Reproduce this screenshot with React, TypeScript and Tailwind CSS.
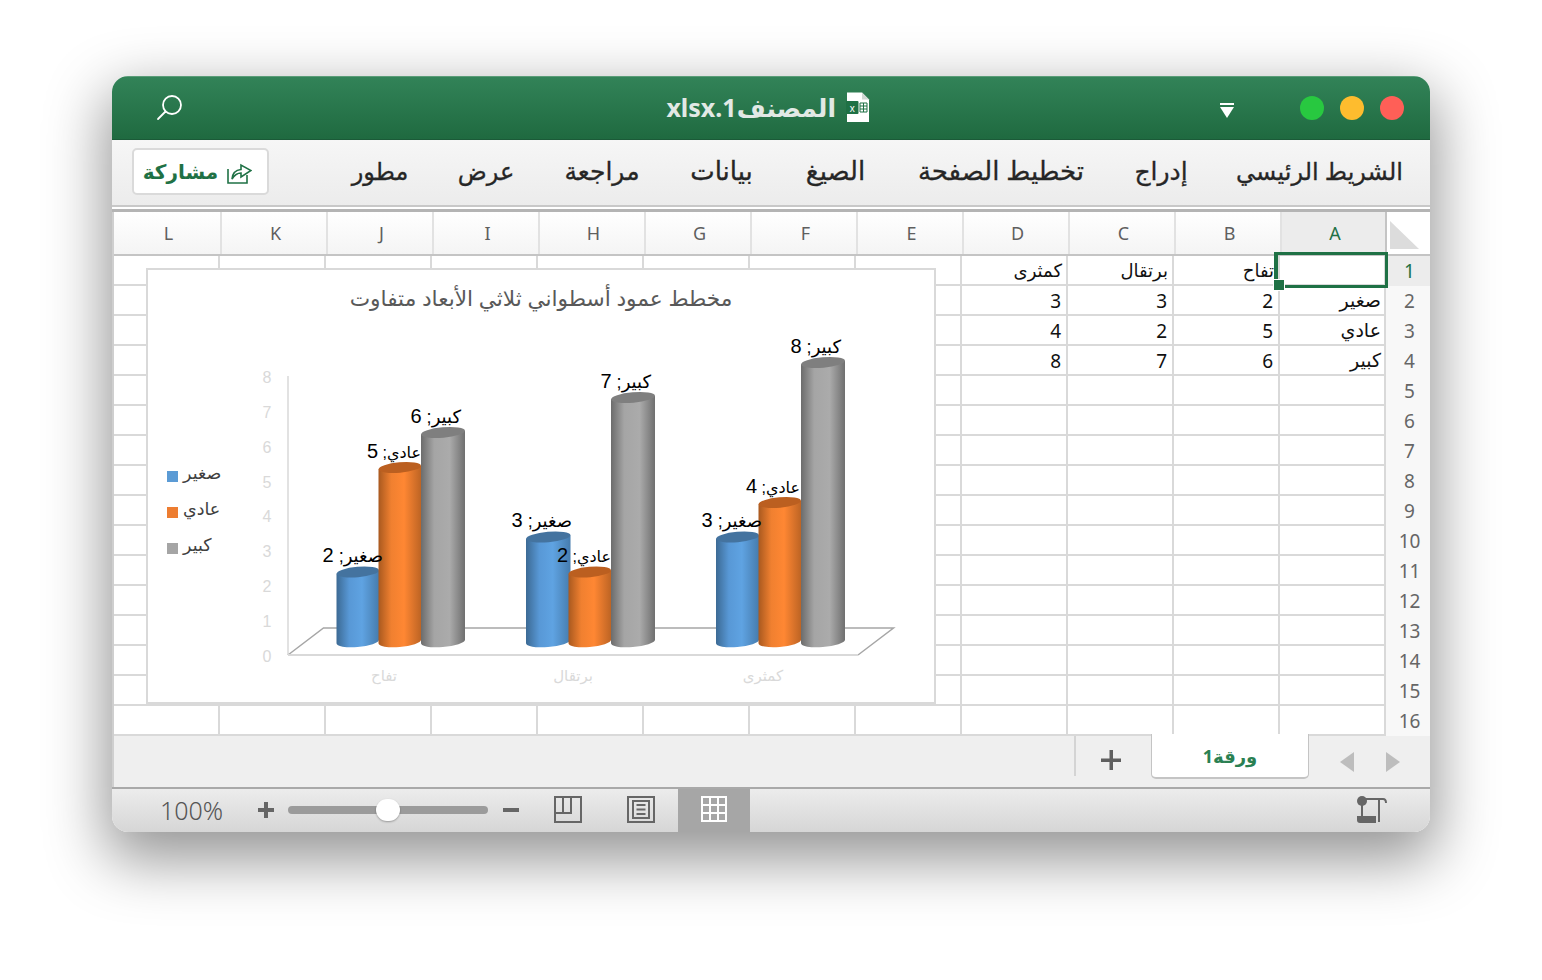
import React from 'react'

const AR = "font-['Noto_Sans','DejaVu_Sans',sans-serif]"

const COLS = ['L', 'K', 'J', 'I', 'H', 'G', 'F', 'E', 'D', 'C', 'B', 'A']
const HEAD_W: Record<string, string> = { L: 'w-[108px]', A: 'w-[105px]' }

const TABS = [
  { label: 'الشريط الرئيسي', w: 'w-[163px] text-[24px]' },
  { label: 'إدراج', w: 'w-[54px] text-[25px]' },
  { label: 'تخطيط الصفحة', w: 'w-[166px] text-[26px]' },
  { label: 'الصيغ', w: 'w-[65px] text-[26px]' },
  { label: 'بيانات', w: 'w-[63px] text-[26px]' },
  { label: 'مراجعة', w: 'w-[76px] text-[25px]' },
  { label: 'عرض', w: 'w-[56px] text-[24px]' },
  { label: 'مطور', w: 'w-[56px] text-[24px]' },
]

// الصفوف من اليمين: A ثم B ثم C ثم D
const DATA: Record<number, string[]> = {
  1: ['', 'تفاح', 'برتقال', 'كمثرى'],
  2: ['صغير', '2', '3', '3'],
  3: ['عادي', '5', '2', '4'],
  4: ['كبير', '6', '7', '8'],
}

const BARS = [
  { x: 336.5, w: 42.5, top: 572, fill: 'url(#blueBar)', cap: '#44739f' },
  { x: 378.5, w: 42.5, top: 467.5, fill: 'url(#orangeBar)', cap: '#bb5f20' },
  { x: 421, w: 44, top: 432.5, fill: 'url(#grayBar)', cap: '#7f7f7f' },
  { x: 526, w: 44.5, top: 537, fill: 'url(#blueBar)', cap: '#44739f' },
  { x: 568.5, w: 42.5, top: 572, fill: 'url(#orangeBar)', cap: '#bb5f20' },
  { x: 611, w: 44, top: 397.5, fill: 'url(#grayBar)', cap: '#7f7f7f' },
  { x: 716, w: 43, top: 537, fill: 'url(#blueBar)', cap: '#44739f' },
  { x: 758.5, w: 42.5, top: 502.5, fill: 'url(#orangeBar)', cap: '#bb5f20' },
  { x: 801, w: 44, top: 362.5, fill: 'url(#grayBar)', cap: '#7f7f7f' },
]

const LABELS = [
  { t: 'صغير', n: 2, x: 383, y: 562 },
  { t: 'عادي', n: 5, x: 421, y: 458 },
  { t: 'كبير', n: 6, x: 461, y: 423 },
  { t: 'صغير', n: 3, x: 572, y: 527 },
  { t: 'عادي', n: 2, x: 611, y: 562 },
  { t: 'كبير', n: 7, x: 651, y: 388 },
  { t: 'صغير', n: 3, x: 762, y: 527 },
  { t: 'عادي', n: 4, x: 800, y: 493 },
  { t: 'كبير', n: 8, x: 841, y: 353 },
]

function Cylinder({ x, w, top, fill, cap }: { x: number; w: number; top: number; fill: string; cap: string }) {
  const rx = w / 2
  const cx = x + rx
  const base = 641.5
  const d = rx * 0.08
  return (
    <g>
      <path
        d={`M${x} ${top + d} L${x} ${base + d} A${rx} 5.5 -5 0 0 ${x + w} ${base - d} L${x + w} ${top - d} Z`}
        fill={fill}
      />
      <ellipse cx={cx} cy={top} rx={rx} ry={5.2} transform={`rotate(-5 ${cx} ${top})`} fill={cap} />
    </g>
  )
}

function Chart() {
  return (
    <div className="absolute left-[32px] top-[12px] w-[790px] h-[436px] border-2 border-[#d9d9d9] bg-white">
      <div dir="rtl" className={`h-[50px] flex items-center justify-center pt-[7px] text-[21.7px] text-[#595959] whitespace-nowrap ${AR}`}>
        مخطط عمود أسطواني ثلاثي الأبعاد متفاوت
      </div>
      <svg width="786" height="382" viewBox="148 320 786 382" className="block">
        <defs>
          <linearGradient id="blueBar">
            <stop offset="0" stopColor="#3c6a94" />
            <stop offset="0.3" stopColor="#5898d6" />
            <stop offset="0.6" stopColor="#5fa3e2" />
            <stop offset="1" stopColor="#467cae" />
          </linearGradient>
          <linearGradient id="orangeBar">
            <stop offset="0" stopColor="#a9591f" />
            <stop offset="0.3" stopColor="#f08030" />
            <stop offset="0.6" stopColor="#ff8733" />
            <stop offset="1" stopColor="#bd6424" />
          </linearGradient>
          <linearGradient id="grayBar">
            <stop offset="0" stopColor="#6c6c6c" />
            <stop offset="0.3" stopColor="#a5a5a5" />
            <stop offset="0.65" stopColor="#ababab" />
            <stop offset="1" stopColor="#6f6f6f" />
          </linearGradient>
        </defs>

        {/* المحاور */}
        <line x1="288" y1="376" x2="288" y2="655" stroke="#d9d9d9" strokeWidth="1.5" />
        <path d="M288 655L323.5 628H893.5L858 655" fill="none" stroke="#a6a6a6" strokeWidth="1.5" />
        <line x1="288" y1="655" x2="858" y2="655" stroke="#d9d9d9" strokeWidth="2" />

        {[8, 7, 6, 5, 4, 3, 2, 1, 0].map((n, i) => (
          <text key={n} x="267" y={383 + i * 34.85} textAnchor="middle" fill="#d9d9d9" className="text-[16px] font-['Liberation_Sans',sans-serif]">
            {n}
          </text>
        ))}

        {[
          { t: 'تفاح', x: 384 },
          { t: 'برتقال', x: 573 },
          { t: 'كمثرى', x: 763 },
        ].map((c) => (
          <text key={c.t} x={c.x} y="681" textAnchor="middle" fill="#d9d9d9" className={`text-[15px] ${AR}`}>
            {c.t}
          </text>
        ))}

        {BARS.map((b, i) => (
          <Cylinder key={i} {...b} />
        ))}

        {LABELS.map((l, i) => (
          <text
            key={i}
            x={l.x}
            y={l.y}
            direction="rtl"
            fill="#000"
            className={`font-['Liberation_Sans','DejaVu_Sans',sans-serif] ${l.t === 'عادي' ? 'text-[16px]' : 'text-[18px]'}`}
          >
            {l.t}; <tspan className="text-[20px]">{l.n}</tspan>
          </text>
        ))}

        {/* وسيلة الإيضاح */}
        {[
          { t: 'صغير', y: 471, c: '#5b9bd5' },
          { t: 'عادي', y: 507, c: '#ed7d31' },
          { t: 'كبير', y: 543, c: '#a5a5a5' },
        ].map((l) => (
          <g key={l.t}>
            <rect x="167" y={l.y} width="11" height="11" fill={l.c} />
            <text x="183" y={l.y + 8} fill="#404040" className={`text-[17.5px] ${AR}`}>
              {l.t}
            </text>
          </g>
        ))}
      </svg>
    </div>
  )
}

function SearchIcon() {
  return (
    <svg width="30" height="30" viewBox="0 0 30 30" fill="none" stroke="#fff" strokeWidth="1.8" strokeLinecap="round">
      <circle cx="19" cy="12" r="9" />
      <line x1="12.5" y1="18.5" x2="5" y2="26" />
    </svg>
  )
}

function ExcelDoc() {
  return (
    <svg width="24" height="30" viewBox="0 0 24 30">
      <path d="M1 0.5H16L23 7.5V30H1Z" fill="#fff" />
      <path d="M16 0.5V7.5H23Z" fill="#cfd8d3" />
      <rect x="0" y="9" width="12.5" height="13" rx="1" fill="#1f7145" />
      <text x="6.2" y="19.5" textAnchor="middle" fill="#fff" className="text-[10px] font-['Liberation_Sans',sans-serif]">x</text>
      <path d="M14 11h7v9h-7zM14 14h7M14 17h7M17.5 11v9" fill="none" stroke="#1f7145" strokeWidth="1" />
    </svg>
  )
}

function ShareIcon() {
  return (
    <svg width="25" height="25" viewBox="0 0 25 25" fill="none" stroke="#1f7145" strokeWidth="1.6">
      <path d="M1 10V24H20V16" />
      <path d="M5 20C5.5 14 9 11 14 10.5V6L24 11.5L14 18V14C10 14 7.5 16 5 20Z" />
    </svg>
  )
}

function RowHead({ n }: { n: number }) {
  return (
    <div
      className={`h-[30px] flex items-center justify-center pl-[3px] text-[19px] font-['Noto_Sans',sans-serif] ${
        n === 1 ? 'bg-[#ececec] text-[#1f7145]' : 'bg-[#f8f8f8] text-[#666666]'
      }`}
    >
      {n}
    </div>
  )
}

export default function App() {
  const rows = Array.from({ length: 16 }, (_, i) => i + 1)

  return (
    <div className="w-[1542px] h-[980px] bg-white pl-[112px] pt-[76px] overflow-hidden">
      <div className="w-[1318px] h-[756px] rounded-[16px] overflow-hidden flex flex-col bg-white shadow-[0_22px_60px_6px_rgba(0,0,0,0.42)]">
        {/* شريط العنوان */}
        <div className="h-[64px] shrink-0 flex items-center bg-gradient-to-b from-[#328358] to-[#1f6a40] border-b border-[#1b5a38] border-t border-t-[#5a9c78]">
          <div className="ml-[41px]">
            <SearchIcon />
          </div>
          <div className="ml-[451px] w-[202px] flex items-center justify-end gap-[10px]">
            <div dir="rtl" className={`text-[25px] font-bold text-[#e2e9e5] whitespace-nowrap ${AR}`}>
              المصنف1.xlsx
            </div>
          </div>
          <div className="ml-[10px] -mt-[3px]">
            <ExcelDoc />
          </div>
          <svg width="14" height="16" viewBox="0 0 14 16" className="ml-[350px] mt-[5px]">
            <rect x="0" y="0" width="14" height="2" fill="#fff" />
            <path d="M0 4H14L7 15Z" fill="#fff" />
          </svg>
          <div className="ml-auto mr-[26px] flex items-center gap-[16px]">
            <div className="w-[24px] h-[24px] rounded-full bg-[#28c840]" />
            <div className="w-[24px] h-[24px] rounded-full bg-[#febc2e]" />
            <div className="w-[24px] h-[24px] rounded-full bg-[#ff5f57]" />
          </div>
        </div>

        {/* الشريط */}
        <div className="h-[65px] shrink-0 flex items-center bg-gradient-to-b from-[#f6f6f6] to-[#ececec]">
          <div className="ml-[20px] w-[137px] h-[47px] pr-[6px] rounded-[5px] border-2 border-[#dadada] bg-white flex items-center justify-center gap-[9px] -mt-[2px]">
            <div dir="rtl" className={`text-[20px] font-bold text-[#1f7145] ${AR}`}>
              مشاركة
            </div>
            <ShareIcon />
          </div>
          <div dir="rtl" className={`ml-auto mr-[29px] flex items-center gap-[50px] -mt-[4px] text-[#262626] [-webkit-text-stroke:0.3px_#262626] ${AR}`}>
            {TABS.map((t) => (
              <div key={t.label} className={`${t.w} whitespace-nowrap flex justify-center`}>
                {t.label}
              </div>
            ))}
          </div>
        </div>

        {/* فاصل شريط الصيغة */}
        <div className="h-[7px] shrink-0 bg-white border-t-2 border-t-[#c8c8c8] border-b-3 border-b-[#b4b4b4]" />

        {/* رؤوس الأعمدة */}
        <div className="h-[44px] shrink-0 flex border-l-2 border-[#cfcfcf] bg-gradient-to-b from-white to-[#f4f4f4]">
          <div className="flex border-b-2 border-[#c4c4c4]">
            {COLS.map((c) => (
              <div
                key={c}
                className={`${HEAD_W[c] ?? 'w-[106px]'} flex items-center justify-center pl-[3px] border-r-2 text-[18px] font-['Noto_Sans',sans-serif] ${
                  c === 'A' ? 'bg-[#ececec] text-[#1f7145] border-[#c4c4c4]' : 'text-[#5f5f5f] border-[#e2e2e2]'
                }`}
              >
                {c}
              </div>
            ))}
          </div>
          <div className="flex-1 border-b-2 border-[#c4c4c4] bg-white flex items-end justify-center pb-[4px]">
            <svg width="32" height="30" viewBox="0 0 32 30" className="-ml-[10px]">
              <path d="M2 1L31 29H2Z" fill="#dcdcdc" />
            </svg>
          </div>
        </div>

        {/* الخلايا */}
        <div className="relative h-[480px] shrink-0 flex border-l-2 border-[#cfcfcf] bg-white">
          <div className="grid grid-cols-[repeat(12,106px)] auto-rows-[30px]">
            {rows.map((r) =>
              COLS.map((c, i) => {
                const value = DATA[r]?.[11 - i] ?? ''
                const digit = /^[0-9]$/.test(value)
                return (
                  <div
                    key={c + r}
                    dir="rtl"
                    className={`flex items-center justify-start border-r-2 border-b-2 border-[#d9d9d9] text-[#111111] whitespace-nowrap ${
                      digit ? 'text-[19px] pt-[2px] pr-[5px]' : c === 'A' ? 'text-[19px] pr-[3px]' : 'text-[18px] pr-[4px]'
                    } ${AR}`}
                  >
                    {value}
                  </div>
                )
              })
            )}
          </div>
          <div className="flex-1 flex flex-col">
            {rows.map((r) => (
              <RowHead key={r} n={r} />
            ))}
          </div>

          <Chart />

          {/* الخلية المحددة */}
          <div className="absolute left-[1160px] -top-[4px] w-[114px] h-[36px] border-[3px] border-l-[4px] border-[#1f7145]" />
          <div className="absolute left-[1159px] top-[23px] w-[12px] h-[12px] bg-[#1f7145] border border-white" />
        </div>

        {/* أوراق العمل */}
        <div className="h-[51px] shrink-0 flex items-start bg-[#efefef] border-l-2 border-[#cfcfcf]">
          <div className="h-[40px] ml-[960px] border-l-2 border-[#d4d4d4] w-[77px] flex items-center justify-center pr-[5px]">
            <svg width="20" height="20" viewBox="0 0 20 20" fill="#5f5f5f" className="mt-[7px]">
              <rect x="8.5" y="0" width="3.5" height="20" />
              <rect x="0" y="8.5" width="20" height="3.5" />
            </svg>
          </div>
          <div dir="rtl" className={`w-[158px] h-[45px] -mt-[2px] relative bg-white rounded-b-[5px] border-x border-b-2 border-[#c4c4c4] border-t-0 flex items-center justify-center pt-[2px] text-[18px] font-bold text-[#2a8052] ${AR}`}>
            ورقة1
          </div>
          <div className="ml-[31px] mt-[16px] flex items-center gap-[32px]">
            <svg width="14" height="20" viewBox="0 0 14 20"><path d="M14 0V20L0 10Z" fill="#bdbdbd" /></svg>
            <svg width="14" height="20" viewBox="0 0 14 20"><path d="M0 0V20L14 10Z" fill="#bdbdbd" /></svg>
          </div>
        </div>

        {/* شريط الحالة */}
        <div className="h-[45px] shrink-0 flex items-center pb-[2px] bg-gradient-to-b from-[#ececec] to-[#d6d6d6] border-t-2 border-[#a9a9a9]">
          <div className="ml-[48px] mt-[2px] text-[25px] text-[#555555] font-['Noto_Sans',sans-serif] font-light w-[64px]">100%</div>
          <svg width="16" height="16" viewBox="0 0 16 16" fill="#666" className="ml-[34px]">
            <rect x="6" y="0" width="4" height="16" /><rect x="0" y="6" width="16" height="4" />
          </svg>
          <div className="relative ml-[14px] w-[200px] h-[8px] rounded-full bg-[#9b9b9b]">
            <div className="absolute left-[88px] -top-[7px] w-[24px] h-[22px] rounded-full bg-white shadow-[0_1px_2px_rgba(0,0,0,0.3)]" />
          </div>
          <div className="ml-[15px] w-[16px] h-[4px] bg-[#666666]" />
          <svg width="28" height="27" viewBox="0 0 28 27" fill="none" stroke="#666" strokeWidth="2" className="ml-[35px]">
            <path d="M1 1H27V26H1ZM1 17H17V1M9 1V17" />
          </svg>
          <svg width="28" height="27" viewBox="0 0 28 27" fill="none" stroke="#666" strokeWidth="2" className="ml-[45px]">
            <path d="M1 1H27V26H1ZM6 5H22V22H6ZM9.5 9H18.5M9.5 13.5H18.5M9.5 18H18.5" />
          </svg>
          <div className="ml-[23px] w-[72px] h-[44px] -mb-[2px] bg-[#a6a6a6] flex items-center justify-center pb-[3px]">
            <svg width="26" height="26" viewBox="0 0 26 26">
              <rect width="26" height="26" fill="#fff" />
              {[2, 10, 18].map((x) =>
                [2, 10, 18].map((y) => <rect key={`${x}-${y}`} x={x} y={y} width="6" height="6" fill="#a6a6a6" />)
              )}
            </svg>
          </div>
          <svg width="32" height="30" viewBox="0 0 32 30" className="ml-[606px]" fill="none" stroke="#666">
            <circle cx="6" cy="6" r="5" fill="#666" stroke="none" />
            <path d="M6 10V21" strokeWidth="2" />
            <path d="M10 4H27Q30 4 30 8M23 4V27" strokeWidth="2" />
            <path d="M1 21H20V28H4Q1 28 1 25Z" fill="#666" stroke="none" />
          </svg>
        </div>
      </div>
    </div>
  )
}
